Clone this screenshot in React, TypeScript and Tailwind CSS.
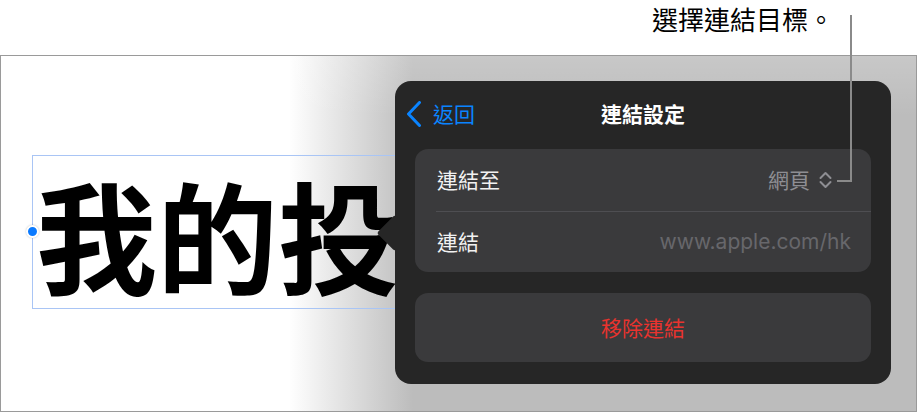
import React from "react";

const CJK = '"Noto Sans CJK TC", "Noto Sans", sans-serif';

function BackChevron() {
  return (
    <svg width="16" height="26" viewBox="0 0 16 26" fill="none">
      <path d="M13.5 1.5 L2.5 13 L13.5 24.5" stroke="#0a84ff" strokeWidth="3" strokeLinecap="round" strokeLinejoin="round" />
    </svg>
  );
}

function UpDown() {
  return (
    <svg width="13" height="18" viewBox="0 0 13 18" fill="none">
      <path d="M1.5 7 L6.5 2 L11.5 7" stroke="#8e8e93" strokeWidth="2" strokeLinecap="round" strokeLinejoin="round" />
      <path d="M1.5 11 L6.5 16 L11.5 11" stroke="#8e8e93" strokeWidth="2" strokeLinecap="round" strokeLinejoin="round" />
    </svg>
  );
}

export default function App() {
  return (
    <div className="relative w-[918px] h-[412px] bg-white overflow-hidden" style={{ fontFamily: CJK }}>
      {/* callout */}
      <div className="h-[55px] flex justify-end pr-[84px] pt-[6px]">
        <span className="text-[26px] leading-[26px] text-black">選擇連結目標。</span>
      </div>

      {/* frame */}
      <div className="relative w-[917px] h-[357px] border border-[#9a9a9a] overflow-hidden bg-[linear-gradient(to_bottom,rgba(255,255,255,0.18),rgba(255,255,255,0)_60px),linear-gradient(to_right,#ffffff_288px,#bcbcbc_412px)]">
        {/* text box */}
        <div className="relative ml-[31px] mt-[99px] w-[440px] h-[154px] border border-[#a9c5f5] flex items-center">
          <span className="ml-[3px] text-[121px] leading-none font-bold text-black whitespace-nowrap" style={{ fontFamily: CJK }}>
            我的投
          </span>
          <div className="absolute left-[-7px] top-[69px] w-[13px] h-[13px] rounded-full bg-[#0a7aff] border-2 border-white shadow-[0_0_2px_rgba(0,0,0,0.25)]" />
        </div>

        {/* popover */}
        <div className="absolute left-[394px] top-[25px] w-[496px] h-[303px] rounded-[16px] bg-[#262626] flex flex-col px-[20px]">
          <div className="absolute left-[-13px] top-[139px] w-[26px] h-[26px] rotate-45 rounded-[3px] bg-[#262626]" />
          <div className="relative h-[68px] -mx-[20px] pb-[2px] grid grid-cols-[1fr_auto_1fr] items-center">
            <div className="flex items-center pl-[11px] gap-[11px] text-[#0a84ff] text-[21px]">
              <BackChevron />
              <span>返回</span>
            </div>
            <div className="text-white text-[21px] font-bold">連結設定</div>
            <div />
          </div>

          <div className="relative rounded-[13px] bg-[#3a3a3c] flex flex-col">
            <div className="h-[62px] flex items-center justify-between pl-[22px] pr-[39px]">
              <span className="text-[21px] text-[#f2f2f2]">連結至</span>
              <div className="flex items-center gap-[9px]">
                <span className="text-[21px] text-[#8e8e93]">網頁</span>
                <UpDown />
              </div>
            </div>
            <div className="ml-[21px] h-px bg-[#4e4e52]" />
            <div className="h-[60px] flex items-center justify-between pl-[22px] pr-[20px]">
              <span className="text-[21px] text-[#f2f2f2]">連結</span>
              <span className="text-[21px] text-[#67676b]" style={{ fontFamily: 'Inter, "Liberation Sans", sans-serif' }}>
                www.apple.com/hk
              </span>
            </div>
          </div>

          <div className="mt-[21px] h-[69px] rounded-[13px] bg-[#3a3a3c] flex items-center justify-center">
            <span className="text-[21px] text-[#e8332e]">移除連結</span>
          </div>
        </div>
      </div>

      {/* leader line */}
      <div className="absolute left-[850px] top-[15px] w-[2px] h-[167px] bg-[#8a8a8a]" />
      <div className="absolute left-[837px] top-[180px] w-[15px] h-[2px] bg-[#8a8a8a]" />
    </div>
  );
}
